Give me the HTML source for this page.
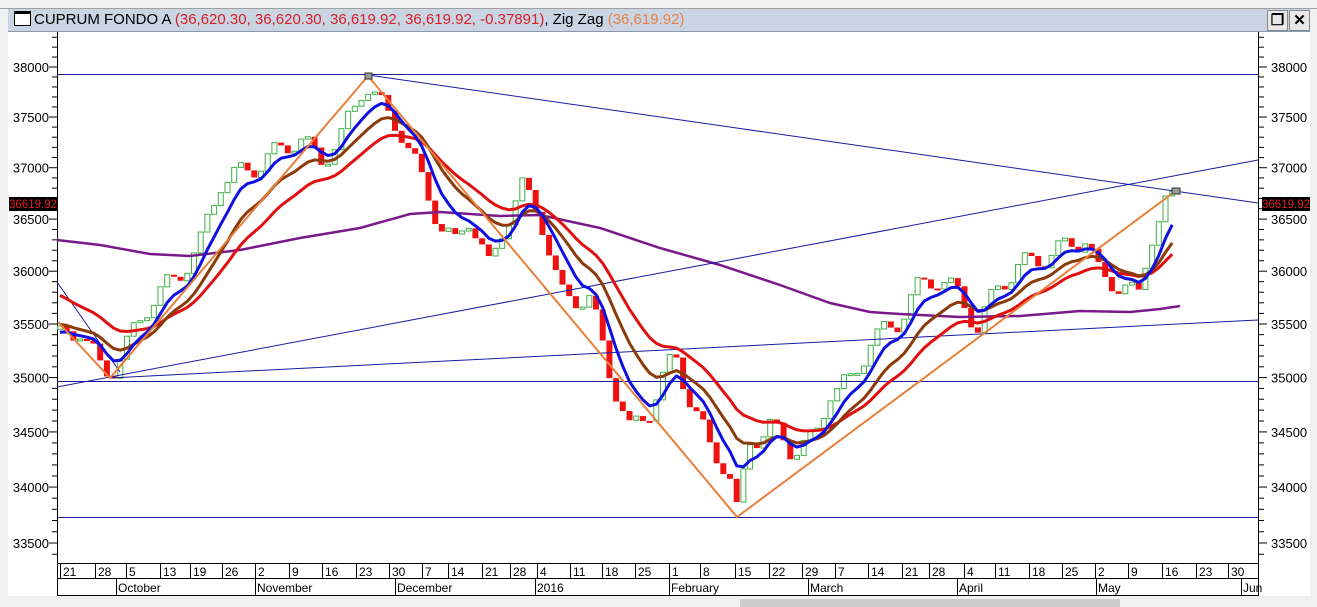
<!DOCTYPE html>
<html><head><meta charset="utf-8"><style>
body{margin:0;width:1317px;height:607px;overflow:hidden;background:#f0f0f0;font-family:"Liberation Sans",sans-serif;position:relative}
#top{position:absolute;left:0;top:0;width:1317px;height:8px;background:#f0f0f0;border-bottom:1px solid #a0a0a0}
#title{position:absolute;left:8px;top:9px;width:1302px;height:22px;background:#c9d5e2;border-bottom:1px solid #8a9aaa;font-size:15px;line-height:22px;white-space:nowrap}
#title .ic{display:inline-block;width:15px;height:11px;border:1px solid #000;border-top-width:3px;vertical-align:-2px;margin:0 3px 0 6px;background:#fff}
.btn{position:absolute;top:1px;width:19px;height:19px;border:1px solid #888;background:#e8e8e8;font-size:15px;line-height:19px;text-align:center;font-weight:bold}
svg{position:absolute;left:0;top:0}
text{font-family:"Liberation Sans",sans-serif}
</style></head><body>
<div id="top"></div>
<div id="title"><span class="ic"></span>CUPRUM FONDO A <span style="color:#d8202a">(36,620.30, 36,620.30, 36,619.92, 36,619.92, -0.37891)</span>, Zig Zag <span style="color:#e8804a">(36,619.92)</span>
<div class="btn" style="left:1259px">&#x2750;</div><div class="btn" style="left:1281px">✕</div></div>
<svg id="s" width="1317" height="607"></svg>
<script>
var s=document.getElementById('s'),h='';
function Y(p){return 67+Math.log(38000/p)*3776.6;}
h+='<rect x="8" y="32" width="1302" height="564" fill="#fff"/>';
h+='<rect x="1310" y="32" width="7" height="575" fill="#f0f0f0"/>';
h+='<rect x="0" y="597" width="1317" height="10" fill="#f0f0f0"/><rect x="740" y="599" width="380" height="8" fill="#cdcdcd"/>';
h+='<line x1="57.5" y1="32" x2="57.5" y2="596" stroke="#000"/><line x1="1258.5" y1="32" x2="1258.5" y2="596" stroke="#000"/>';
h+='<line x1="57" y1="563.5" x2="1259" y2="563.5" stroke="#000"/><line x1="57" y1="578.5" x2="1259" y2="578.5" stroke="#000"/><line x1="57" y1="595.5" x2="1259" y2="595.5" stroke="#000"/>';
for(var p=33300;p<=38300;p+=100){var y=Y(p);if(y<33||y>562)continue;var m=p%500==0;
h+='<line x1="'+(m?49:52)+'" y1="'+y+'" x2="57" y2="'+y+'" stroke="#000"/><line x1="1259" y1="'+y+'" x2="'+(m?1267:1264)+'" y2="'+y+'" stroke="#000"/>';
if(m){h+='<text x="49" y="'+(y+5)+'" font-size="13" text-anchor="end">'+p+'</text><text x="1271" y="'+(y+5)+'" font-size="13">'+p+'</text>';}}
var d=[[21,60],[28,95],[5,126],[13,160],[19,190],[26,222],[2,255],[9,289],[16,322],[23,356],[30,389],[7,422],[14,448],[21,482],[28,510],[4,537],[11,570],[18,602],[25,635],[1,669],[8,700],[15,735],[22,769],[29,802],[7,835],[14,868],[21,902],[28,929],[4,964],[11,995],[18,1029],[25,1062],[2,1095],[9,1128],[16,1162],[23,1196],[30,1228]];
d.forEach(function(a){h+='<line x1="'+(a[1]+.5)+'" y1="564" x2="'+(a[1]+.5)+'" y2="578" stroke="#000"/><text x="'+(a[1]+3)+'" y="576" font-size="12">'+a[0]+'</text>';});
[['October',116],['November',255],['December',395],['2016',535],['February',669],['March',808],['April',957],['May',1096],['Jun',1241]].forEach(function(a){h+='<line x1="'+(a[1]+.5)+'" y1="579" x2="'+(a[1]+.5)+'" y2="595" stroke="#000"/><text x="'+(a[1]+2)+'" y="592" font-size="12">'+a[0]+'</text>';});
var K=[[60,35400],[80,35450],[100,35050],[110,35000],[130,35300],[150,35700],[175,35950],[200,36300],[220,36900],[260,37000],[300,37250],[320,37050],[340,37300],[365,37900],[385,37600],[400,37400],[420,36900],[440,36400],[455,36200],[470,36500],[490,36000],[505,36500],[522,36850],[540,36600],[560,35800],[590,35700],[610,35000],[630,34450],[650,34700],[675,35250],[690,34850],[710,34400],[728,34200],[737,33760],[750,34400],[770,34500],[790,34300],[815,34400],[830,34900],[852,35000],[870,35400],[895,35500],[915,35800],[940,35900],[960,35700],[978,35450],[1000,35900],[1020,36100],[1050,36200],[1085,36300],[1100,35900],[1125,35800],[1138,35700],[1150,36300],[1170,36750],[1177,36620]];
function P(x){for(var i=1;i<K.length;i++)if(x<=K[i][0]){var a=K[i-1],b=K[i];return a[1]+(b[1]-a[1])*(x-a[0])/(b[0]-a[0]);}return K[K.length-1][1];}
var C=[],X=[];for(var x=60;x<=1178;x+=6.7){X.push(x);C.push(P(x)+Math.sin(x*1.7)*110+Math.sin(x*0.9)*50);}
var pc=35450;
for(var i=0;i<C.length;i++){var o=pc,c=C[i],x=X[i],y1=Y(Math.max(o,c)),y2=Y(Math.min(o,c));if(y2-y1<2)y2=y1+2;
if(c>=o)h+='<rect x="'+(x-2.5)+'" y="'+y1+'" width="5" height="'+(y2-y1)+'" fill="#fff" stroke="#3cb043"/>';
else h+='<rect x="'+(x-3)+'" y="'+y1+'" width="6" height="'+(y2-y1)+'" fill="#f01010"/>';pc=c;}
function ema(n,init){var k=2/(n+1),v=init,r=[];C.forEach(function(c){v=v+k*(c-v);r.push(v);});return r;}
function pl(arr,col,w){var pts=arr.map(function(v,i){return X[i].toFixed(1)+','+Y(v).toFixed(1)}).join(' ');h+='<polyline points="'+pts+'" fill="none" stroke="'+col+'" stroke-width="'+w+'" stroke-linejoin="round"/>';}
h+='<polyline points="57,240 100,245 150,254 190,256 240,250 300,238 360,228 410,214 440,212 500,216 540,215 600,228 660,248 720,265 780,285 830,303 870,312 900,314 960,317 1020,316 1080,311 1130,312 1160,309 1180,306" fill="none" stroke="#7a1a8a" stroke-width="2.5"/>';
h+='<line x1="57" y1="74.5" x2="1258" y2="74.5" stroke="#1a1aa0"/><line x1="57" y1="381.5" x2="1258" y2="381.5" stroke="#1a1aa0"/><line x1="57" y1="517.5" x2="1258" y2="517.5" stroke="#1a1aa0"/>';
h+='<line x1="368" y1="75" x2="1258" y2="203" stroke="#1a1aa0"/><line x1="57" y1="387" x2="1258" y2="160" stroke="#1a1aa0"/><line x1="110" y1="378" x2="1258" y2="320" stroke="#1a1aa0"/><line x1="57" y1="282" x2="120" y2="372" stroke="#1a1aa0"/>';
pl(ema(20,35800),'#e01010',3);pl(ema(12,35500),'#8b3a0a',3);pl(ema(6,35400),'#1010e0',3);
h+='<polyline points="58,322 110,378 368,76 737,517 1177,190" fill="none" stroke="#e8803a" stroke-width="2"/>';
h+='<rect x="365" y="73" width="7" height="6" fill="#999" stroke="#333"/><rect x="1172" y="188" width="8" height="6" fill="#999" stroke="#333"/>';
h+='<rect x="9" y="197" width="48" height="14" fill="#000"/><text x="33" y="208" font-size="11.5" fill="#e02020" text-anchor="middle">36619.92</text>';
h+='<rect x="1262" y="197" width="48" height="14" fill="#000"/><text x="1286" y="208" font-size="11.5" fill="#e02020" text-anchor="middle">36619.92</text>';
s.innerHTML=h;
</script>
</body></html>
